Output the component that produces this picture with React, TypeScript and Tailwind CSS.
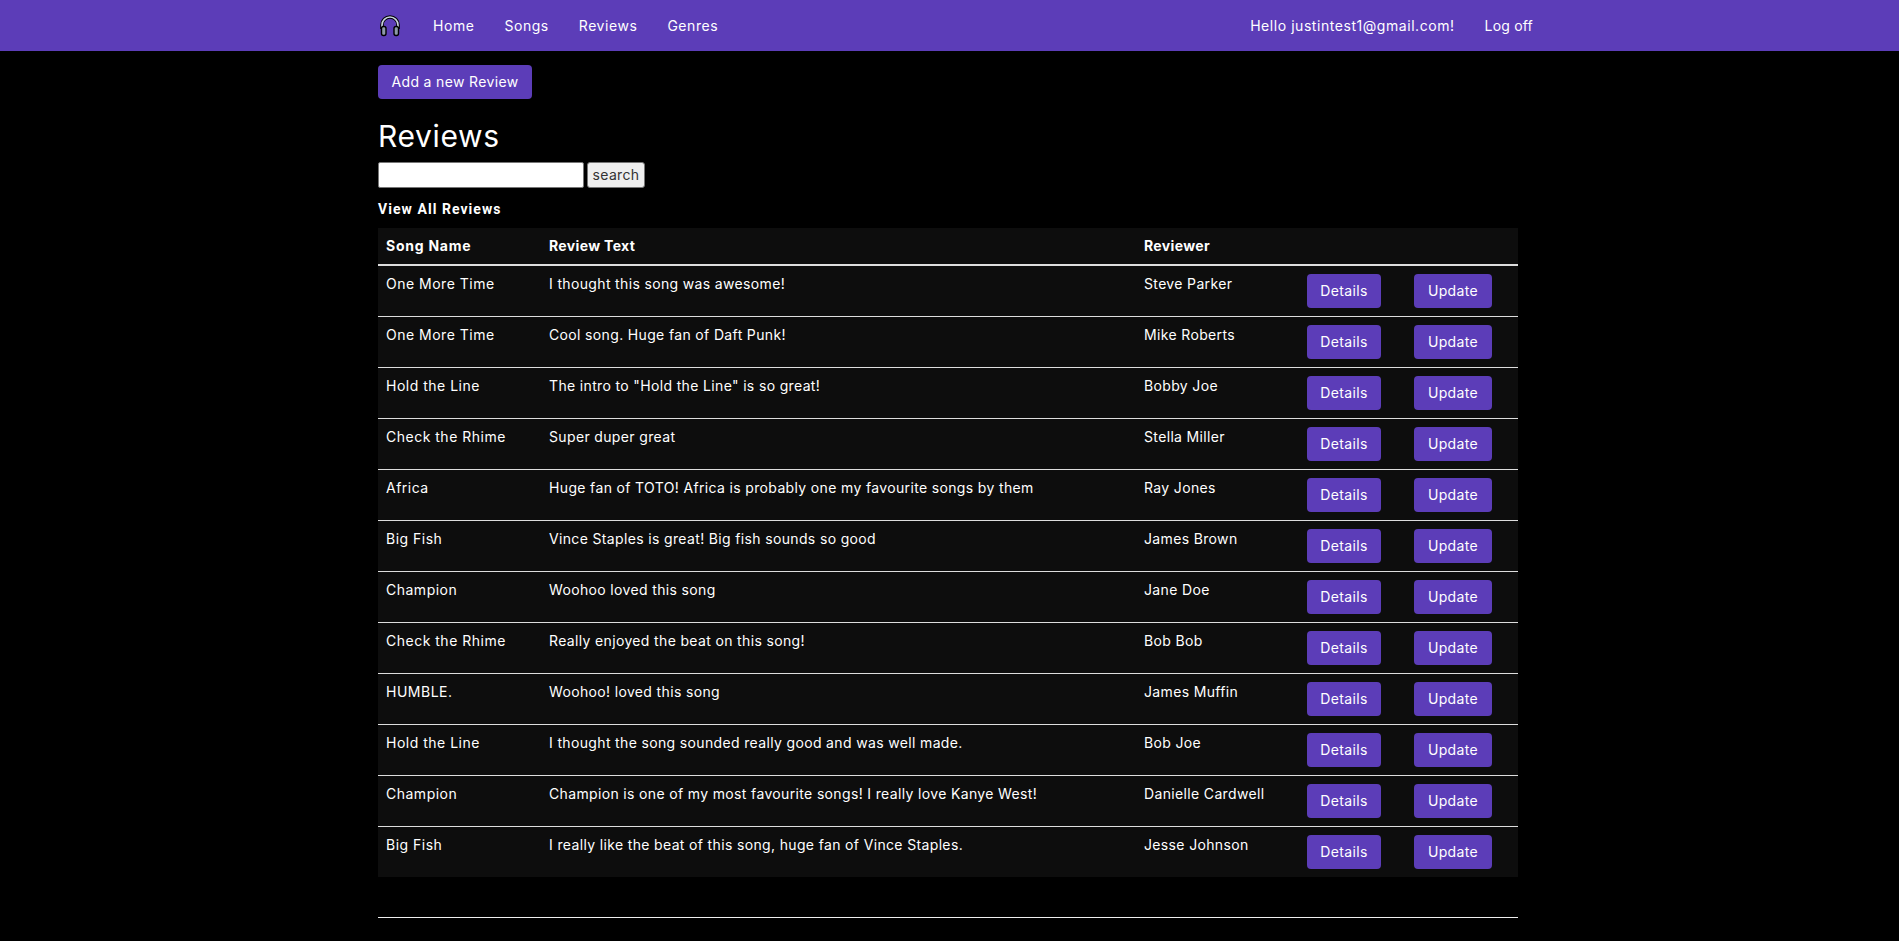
const reviews = [
  { song: 'One More Time', text: 'I thought this song was awesome!', reviewer: 'Steve Parker' },
  { song: 'One More Time', text: 'Cool song. Huge fan of Daft Punk!', reviewer: 'Mike Roberts' },
  { song: 'Hold the Line', text: 'The intro to "Hold the Line" is so great!', reviewer: 'Bobby Joe' },
  { song: 'Check the Rhime', text: 'Super duper great', reviewer: 'Stella Miller' },
  { song: 'Africa', text: 'Huge fan of TOTO! Africa is probably one my favourite songs by them', reviewer: 'Ray Jones' },
  { song: 'Big Fish', text: 'Vince Staples is great! Big fish sounds so good', reviewer: 'James Brown' },
  { song: 'Champion', text: 'Woohoo loved this song', reviewer: 'Jane Doe' },
  { song: 'Check the Rhime', text: 'Really enjoyed the beat on this song!', reviewer: 'Bob Bob' },
  { song: 'HUMBLE.', text: 'Woohoo! loved this song', reviewer: 'James Muffin' },
  { song: 'Hold the Line', text: 'I thought the song sounded really good and was well made.', reviewer: 'Bob Joe' },
  { song: 'Champion', text: 'Champion is one of my most favourite songs! I really love Kanye West!', reviewer: 'Danielle Cardwell' },
  { song: 'Big Fish', text: 'I really like the beat of this song, huge fan of Vince Staples.', reviewer: 'Jesse Johnson' },
]

function Headphones() {
  return (
    <svg width="22" height="22" viewBox="0 0 22 22" fill="none" className="block">
      <path d="M3 14V10a8 8 0 0 1 16 0v4" stroke="#000" strokeWidth="3.6" />
      <path d="M3 14V10a8 8 0 0 1 16 0v4" stroke="#c9d4e0" strokeWidth="1.6" />
      <rect x="2.5" y="11.5" width="4.5" height="9" rx="2" fill="#8d9aa8" stroke="#000" strokeWidth="1.4" />
      <rect x="15" y="11.5" width="4.5" height="9" rx="2" fill="#8d9aa8" stroke="#000" strokeWidth="1.4" />
    </svg>
  )
}

function PurpleButton({ children, width }: { children: string; width: string }) {
  return (
    <button className={`h-[34px] ${width} rounded-[4px] bg-[#5c3db8] text-white text-sm text-center whitespace-nowrap tracking-[0.35px]`}>
      {children}
    </button>
  )
}

export default function App() {
  return (
    <div className="min-h-screen bg-black text-white text-sm font-['Inter',sans-serif] tracking-[0.35px]">
      <nav className="h-[51px] bg-[#5c3db8]">
        <div className="w-[1155px] ml-[378px] h-full flex items-center justify-between">
          <div className="flex items-center tracking-[0.55px]">
            <div className="ml-[1px] mr-[32px]">
              <Headphones />
            </div>
            <div className="flex items-center gap-[30px]">
              <a>Home</a>
              <a>Songs</a>
              <a>Reviews</a>
              <a>Genres</a>
            </div>
          </div>
          <div className="flex items-center gap-[30px]">
            <a className="tracking-[0.55px]">Hello justintest1@gmail.com!</a>
            <a className="tracking-[0.2px]">Log off</a>
          </div>
        </div>
      </nav>

      <main className="w-[1140px] ml-[378px] pt-[14px]">
        <PurpleButton width="w-[154px]">Add a new Review</PurpleButton>
        <h2 className="mt-[21px] text-[30px] leading-[33px] tracking-[0.65px]">Reviews</h2>
        <div className="mt-[9px] flex items-center gap-[3px] h-[26px]">
          <input className="w-[206px] h-[26px] bg-white border border-[#767676] rounded-[2px]" />
          <button className="w-[58px] h-[26px] bg-[#efefef] border border-[#767676] rounded-[3px] text-[#333] text-sm">
            search
          </button>
        </div>
        <p className="mt-[11px] h-[20px] leading-[20px] font-bold font-['Roboto',sans-serif] tracking-[1.05px]">View All Reviews</p>

        <table className="mt-[9px] w-[1140px] table-fixed border-collapse bg-[#0d0d0d]">
          <thead>
            <tr className="border-b-2 border-[#ddd]">
              <th className="w-[163px] p-2 text-left font-bold leading-5 tracking-[0.75px]">Song Name</th>
              <th className="w-[595px] p-2 text-left font-bold leading-5">Review Text</th>
              <th className="w-[163px] p-2 text-left font-bold leading-5">Reviewer</th>
              <th className="w-[107px] p-2" />
              <th className="w-[112px] p-2" />
            </tr>
          </thead>
          <tbody>
            {reviews.map((r, i) => (
              <tr key={i} className="border-t border-[#ddd] first:border-t-0">
                <td className="p-2 align-top leading-5 tracking-[0.5px]">{r.song}</td>
                <td className="p-2 align-top leading-5">{r.text}</td>
                <td className="p-2 align-top leading-5">{r.reviewer}</td>
                <td className="p-2 align-top">
                  <PurpleButton width="w-[74px]">Details</PurpleButton>
                </td>
                <td className="p-2 align-top">
                  <PurpleButton width="w-[78px]">Update</PurpleButton>
                </td>
              </tr>
            ))}
          </tbody>
        </table>

        <hr className="mt-[40px] border-t border-[#eee]" />
      </main>
    </div>
  )
}
